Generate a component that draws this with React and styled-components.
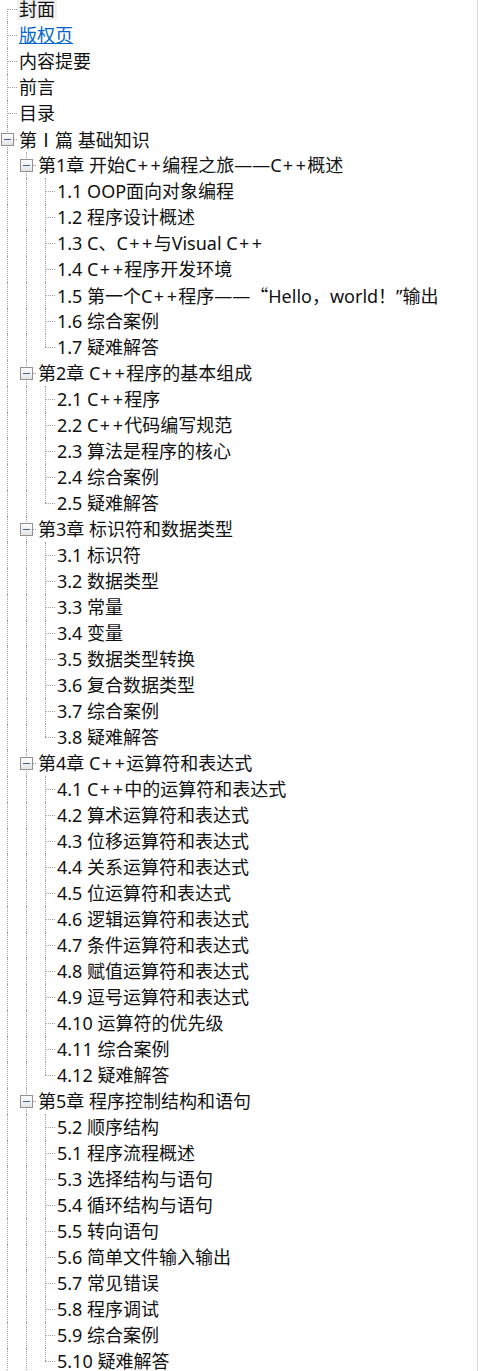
import React from "react"
import styled, { createGlobalStyle, css } from 'styled-components'

const GlobalStyle = createGlobalStyle`
    html, body {
        margin:0;
        padding:0;
        background:#fff;
    }
    body {
        font-family:"Noto Sans", "Noto Sans CJK SC", sans-serif;
        overflow:hidden;
    }
`;

const LINE = '#a0a0a0';

const Frame = styled.div`
    width:477px;
    height:1371px;
    overflow:hidden;
    border-right:1px solid #dadada;
`;

const TreeList = styled.ul`
    list-style:none;
    margin:-4px 0 0 -2px;
    padding:0;
`;

const Row = styled.li`
    display:flex;
    align-items:center;
    height:26px;
`;

const Guide = styled.span`
    position:relative;
    flex:none;
    width:19px;
    height:26px;
    ${p => p.$through && css`
        &::before{
            content:'';
            position:absolute;
            left:9px;
            top:0;
            bottom:0;
            border-left:1px dotted ${LINE};
        }
    `}
`;

const Connector = styled.span`
    position:relative;
    flex:none;
    width:19px;
    height:26px;
    &::before{
        content:'';
        position:absolute;
        left:9px;
        top:${p => p.$first ? '13px' : '0'};
        bottom:${p => p.$last ? '13px' : '0'};
        border-left:1px dotted ${LINE};
    }
    &::after{
        content:'';
        position:absolute;
        left:9px;
        top:13px;
        width:10px;
        border-top:1px dotted ${LINE};
    }
`;

const Expander = styled.span`
    position:absolute;
    z-index:1;
    left:3px;
    top:7px;
    width:11px;
    height:11px;
    border:1px solid #919191;
    background:linear-gradient(#ffffff, #e4e4e4);
    &::after{
        content:'';
        position:absolute;
        left:2px;
        top:5px;
        width:7px;
        height:1px;
        background:#3d6099;
    }
`;

const Label = styled.span`
    display:inline-block;
    height:22px;
    line-height:22px;
    padding:0 2px;
    font-size:18px;
    white-space:nowrap;
    color:${p => p.$hot ? '#0066cc' : '#111'};
    text-decoration:${p => p.$hot ? 'underline' : 'none'};
    background:${p => p.$selected ? '#f0f0f0' : 'transparent'};
`;

// glyphs that the original UI font draws full width
const Cjk = styled.span`
    font-family:"Noto Sans CJK SC", sans-serif;
`;

// the original font's plus sign is wider than Noto Sans'
const Plus = styled.span`
    padding:0 1.3px;
`;

function renderText(str){
    if(typeof str !== 'string') return str;
    return str.split(/([+“Ⅰ])/).map((part, i) => {
        if(part === '+') return <Plus key={i}>+</Plus>;
        if(part === '“' || part === 'Ⅰ') return <Cjk key={i}>{part}</Cjk>;
        return part;
    });
}

const leaves = list => list.map(t => ({ t }));

const tree = [
    { t:'封面', selected:true },
    { t:'版权页', hot:true },
    { t:'内容提要' },
    { t:'前言' },
    { t:'目录' },
    { t:'第Ⅰ篇 基础知识', more:true, children:[
        { t:'第1章 开始C++编程之旅——C++概述', children:leaves([
            '1.1 OOP面向对象编程', '1.2 程序设计概述', '1.3 C、C++与Visual C++',
            '1.4 C++程序开发环境', '1.5 第一个C++程序——“Hello，world！”输出',
            '1.6 综合案例', '1.7 疑难解答',
        ])},
        { t:'第2章 C++程序的基本组成', children:leaves([
            '2.1 C++程序', '2.2 C++代码编写规范', '2.3 算法是程序的核心',
            '2.4 综合案例', '2.5 疑难解答',
        ])},
        { t:'第3章 标识符和数据类型', children:leaves([
            '3.1 标识符', '3.2 数据类型', '3.3 常量', '3.4 变量',
            '3.5 数据类型转换', '3.6 复合数据类型', '3.7 综合案例', '3.8 疑难解答',
        ])},
        { t:'第4章 C++运算符和表达式', children:leaves([
            '4.1 C++中的运算符和表达式', '4.2 算术运算符和表达式', '4.3 位移运算符和表达式',
            '4.4 关系运算符和表达式', '4.5 位运算符和表达式', '4.6 逻辑运算符和表达式',
            '4.7 条件运算符和表达式', '4.8 赋值运算符和表达式', '4.9 逗号运算符和表达式',
            '4.10 运算符的优先级', '4.11 综合案例', '4.12 疑难解答',
        ])},
        { t:'第5章 程序控制结构和语句', more:true, children:leaves([
            '5.2 顺序结构', '5.1 程序流程概述', '5.3 选择结构与语句', '5.4 循环结构与语句',
            '5.5 转向语句', '5.6 简单文件输入输出', '5.7 常见错误', '5.8 程序调试',
            '5.9 综合案例', '5.10 疑难解答',
        ])},
    ]},
];

// flatten the tree into rows; "more" means siblings follow below the visible area
function flatten(nodes, guides = [], rows = []){
    nodes.forEach((node, i) => {
        const last = i === nodes.length - 1 && !node.more;
        rows.push({
            ...node,
            guides,
            first: guides.length === 0 && i === 0,
            last,
            key: rows.length,
        });
        if(node.children){
            flatten(node.children, [...guides, !last], rows);
        }
    });
    return rows;
}

const rows = flatten(tree);

export default function App(){
    return (
        <>
        <GlobalStyle />
        <Frame>
            <TreeList>
                {rows.map(row => (
                    <Row key={row.key}>
                        {row.guides.map((through, i) => <Guide key={i} $through={through} />)}
                        <Connector $first={row.first} $last={row.last}>
                            {row.children && <Expander />}
                        </Connector>
                        <Label $selected={row.selected} $hot={row.hot}>{renderText(row.t)}</Label>
                    </Row>
                ))}
            </TreeList>
        </Frame>
        </>
    )
}
